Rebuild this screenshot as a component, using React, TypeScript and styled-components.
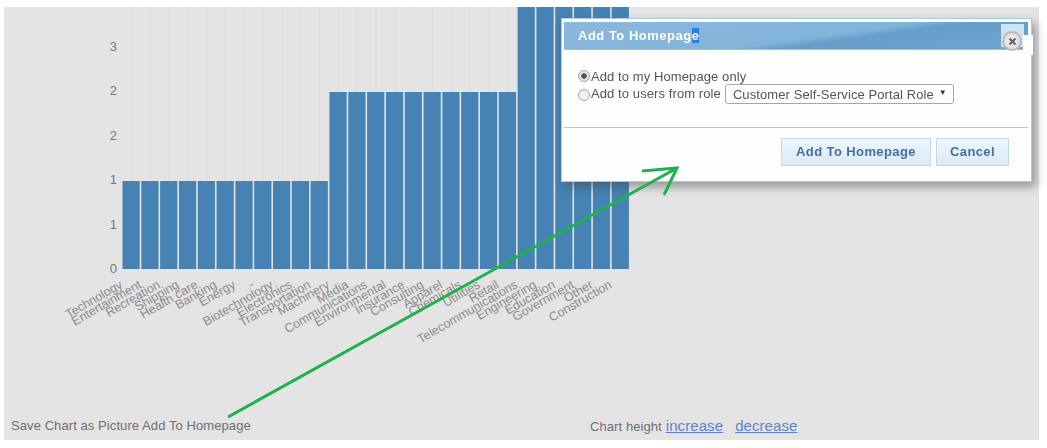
import React, { FC } from "react";
import styled, { createGlobalStyle } from "styled-components";

const GlobalStyle = createGlobalStyle`
  html, body {
    margin: 0;
    padding: 0;
    background: #ffffff;
    font-family: "Liberation Sans", Arial, sans-serif;
  }
`;

const Page = styled.div`
  position: relative;
  width: 1047px;
  height: 448px;
  overflow: hidden;
  padding: 7px 8px 8px 4px;
  box-sizing: border-box;
  filter: blur(0.5px);
`;

const Panel = styled.div`
  display: flex;
  flex-direction: column;
  height: 433px;
  background: #e4e4e4;
`;

const ChartSvg = styled.svg`
  display: block;
  flex: 1;
  min-height: 0;
`;

const Footer = styled.div`
  display: grid;
  grid-template-columns: 579px auto;
  align-items: center;
  height: 30px;
  padding: 0 0 0 7px;
  box-sizing: border-box;
  font-size: 13px;
  letter-spacing: 0.08px;
  color: #6f6f6f;
`;

const FooterText = styled.span`
  white-space: nowrap;
`;

const HeightLink = styled.a<{ $gap: number }>`
  font-size: 15px;
  color: #5f7fd0;
  text-decoration: underline;
  margin-left: ${({ $gap }) => $gap}px;
`;

const Modal = styled.div`
  position: absolute;
  left: 561px;
  top: 18px;
  width: 471px;
  height: 164px;
  box-sizing: border-box;
  padding: 3px 3px 0 2px;
  background: #fdfefe;
  border: 1px solid #a9cbe3;
  box-shadow: 4px 5px 9px rgba(60, 60, 60, 0.45);
  color: #555;
`;

const ModalHeader = styled.div`
  display: flex;
  align-items: center;
  height: 27px;
  padding-left: 14px;
  background: linear-gradient(172deg, #8ab9dc 0%, #82b3d8 55%, #679ecb 62%, #6ea4cf 100%);
  border-bottom: 1px solid #9dc3e0;
`;

const ModalTitle = styled.span`
  font-size: 13px;
  font-weight: bold;
  color: #ffffff;
  letter-spacing: 0.5px;
`;

const Selected = styled.span`
  background: #2b7ce9;
`;

const CloseFrame = styled.div`
  position: absolute;
  left: 439px;
  top: 5px;
  width: 23px;
  height: 23px;
  background: #cfe3f3;
`;

const ClosePatch = styled.div`
  position: absolute;
  left: 461px;
  top: 16px;
  width: 10px;
  height: 20px;
  background: #ffffff;
`;

const CloseButton = styled.div`
  position: absolute;
  left: 440px;
  top: 12px;
  width: 20px;
  height: 20px;
  box-sizing: border-box;
  display: flex;
  align-items: center;
  justify-content: center;
  border-radius: 50%;
  border: 2px solid #bdb9b3;
  background: radial-gradient(circle, #ececec 30%, #d2d2d2 100%);
`;

const ModalBody = styled.div`
  display: flex;
  flex-direction: column;
  height: 78px;
  padding: 19px 0 0 14px;
  box-sizing: border-box;
  font-size: 13px;
  letter-spacing: 0.09px;
  border-bottom: 1px solid #a6cce6;
`;

const RadioRow = styled.label`
  display: flex;
  align-items: flex-start;
  height: 17px;
  line-height: 15px;
`;

const Radio = styled.span<{ $checked?: boolean }>`
  flex: none;
  width: 12px;
  height: 12px;
  margin: ${({ $checked }) => ($checked ? "1px" : "3px")} 1px 0 0;
  border-radius: 50%;
  box-sizing: border-box;
  border: 1px solid #a5a5a5;
  background: ${({ $checked }) =>
    $checked
      ? "radial-gradient(circle, #555 0 2.5px, #e6e6e6 3px)"
      : "linear-gradient(#e9e9e9, #f6f6f6)"};
`;

const RoleSelect = styled.div`
  display: flex;
  justify-content: space-between;
  align-items: center;
  flex: none;
  width: 229px;
  height: 20px;
  margin: -2px 0 0 4px;
  padding: 0 6px 0 7px;
  box-sizing: border-box;
  background: #ffffff;
  border: 1px solid #a6a6a6;
  border-radius: 3px;
  color: #555;
`;

const Caret = styled.span`
  font-size: 8px;
  color: #333;
  margin-top: -3px;
`;

const ModalActions = styled.div`
  display: flex;
  justify-content: flex-end;
  gap: 5px;
  padding: 10px 19px 0 0;
`;

const ActionButton = styled.div<{ $width: number }>`
  display: flex;
  align-items: center;
  justify-content: center;
  width: ${({ $width }) => $width}px;
  height: 28px;
  padding-bottom: 2px;
  box-sizing: border-box;
  background: linear-gradient(#eef5fc, #dbeaf8);
  border: 1px solid #c2d9ec;
  color: #44709f;
  font-size: 13px;
  font-weight: bold;
  letter-spacing: 0.4px;
`;

const ArrowSvg = styled.svg`
  position: absolute;
  left: 0;
  top: 0;
  pointer-events: none;
`;

const LABELS = [
  "Technology", "Entertainment", "Recreation", "Shipping", "Health care", "Banking", "Energy", "-",
  "Biotechnology", "Electronics", "Transportation", "Machinery", "Media", "Communications",
  "Environmental", "Insurance", "Consulting", "Apparel", "Chemicals", "Utilities", "Retail",
  "Telecommunications", "Engineering", "Education", "Government", "Other", "Construction",
];

const BAR_W = 18.815;
const BAR_X = 122;
const BASE = 269;

const barTop = (i: number) => (i < 11 ? 181 : i < 21 ? 92 : 0);

const TICKS: [string, number][] = [
  ["3", 51], ["2", 95], ["2", 140], ["1", 184], ["1", 229], ["0", 273],
];

const Chart: FC = () => (
  <ChartSvg viewBox="4 7 1035 403" width={1035} height={403}>
    {LABELS.map((_, i) => {
      const x = BAR_X + BAR_W * (i + 0.5);
      return <line key={i} x1={x} x2={x} y1={7} y2={BASE} stroke="#dcdcdc" strokeWidth={1} />;
    })}
    {LABELS.map((_, i) => (
      <rect
        key={i}
        x={BAR_X + BAR_W * i + 0.5}
        y={barTop(i)}
        width={BAR_W - 1.6}
        height={BASE - barTop(i)}
        fill="#4682b4"
      />
    ))}
    {TICKS.map(([t, y], i) => (
      <text key={i} x={117} y={y} textAnchor="end" fontSize={13} fill="#777">
        {t}
      </text>
    ))}
    {LABELS.map((label, i) => {
      const x = BAR_X + BAR_W * (i + 0.5) - 8;
      return (
        <text
          key={i}
          transform={`translate(${x} 287) rotate(-30)`}
          textAnchor="end"
          fontSize={12.5}
          fill="#8a8a8a"
        >
          {label}
        </text>
      );
    })}
  </ChartSvg>
);

const App: FC = () => (
  <Page>
    <GlobalStyle />
    <Panel>
      <Chart />
      <Footer>
        <FooterText>Save Chart as Picture Add To Homepage</FooterText>
        <FooterText>
          Chart height
          <HeightLink $gap={4}>increase</HeightLink>
          <HeightLink $gap={12}>decrease</HeightLink>
        </FooterText>
      </Footer>
    </Panel>
    <Modal>
      <ModalHeader>
        <ModalTitle>
          Add To Homepag<Selected>e</Selected>
        </ModalTitle>
      </ModalHeader>
      <CloseFrame />
      <ClosePatch />
      <CloseButton>
        <svg width="9" height="9" viewBox="0 0 9 9">
          <path d="M1.5 1.5 L7.5 7.5 M7.5 1.5 L1.5 7.5" stroke="#666" strokeWidth="2.2" />
        </svg>
      </CloseButton>
      <ModalBody>
        <RadioRow>
          <Radio $checked />
          Add to my Homepage only
        </RadioRow>
        <RadioRow>
          <Radio />
          Add to users from role
          <RoleSelect>
            Customer Self-Service Portal Role
            <Caret>▼</Caret>
          </RoleSelect>
        </RadioRow>
      </ModalBody>
      <ModalActions>
        <ActionButton $width={150}>Add To Homepage</ActionButton>
        <ActionButton $width={73}>Cancel</ActionButton>
      </ModalActions>
    </Modal>
    <ArrowSvg width={1047} height={448} viewBox="0 0 1047 448">
      <path
        d="M228 417 L677 168 M642 171 L677 168 L664 195"
        fill="none"
        stroke="#1fb14c"
        strokeWidth={3}
      />
    </ArrowSvg>
  </Page>
);

export default App;
